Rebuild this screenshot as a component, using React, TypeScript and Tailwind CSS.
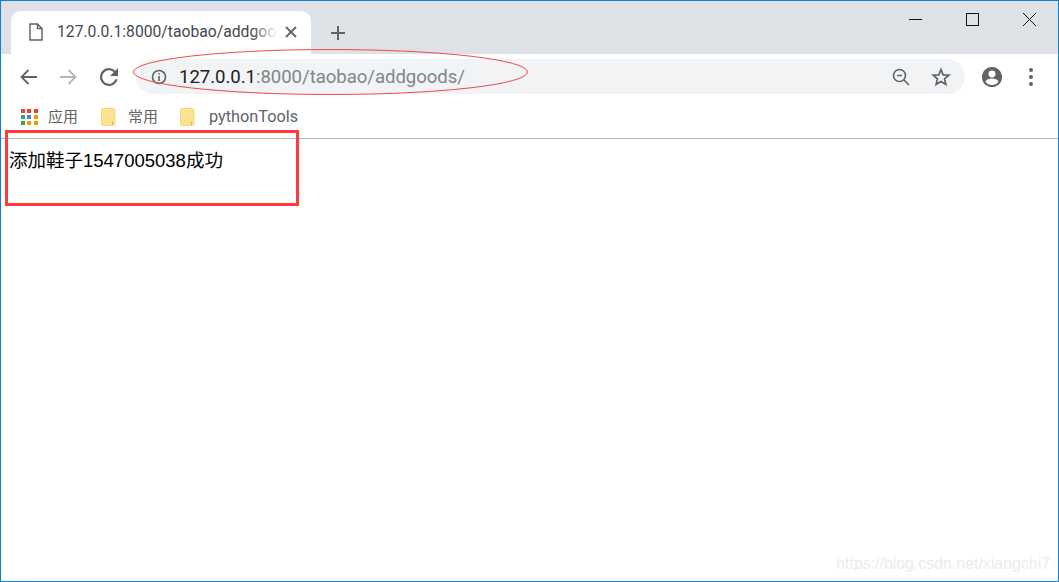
import React from "react";

const ui = "font-['Roboto','Noto_Sans_CJK_SC',sans-serif]";

function Folder() {
  return (
    <svg width="16" height="18" viewBox="0 0 16 18" className="shrink-0">
      <path d="M1.5 1.5 Q1.5 0.5 2.5 0.5 H13 Q15 0.5 15 3 V16 Q15 17.5 13.500 17.500 H2.500 Q1.500 17.500 1.500 16.500 Z" fill="#fde293" stroke="#fbd873" />
      <path d="M12.500 17 V13.500" stroke="#d9b85c" strokeWidth="1" />
    </svg>
  );
}

function Apps() {
  const c = ["#ea4335", "#ea4335", "#ea4335", "#34a853", "#4285f4", "#f29900", "#34a853", "#f29900", "#f29900"];
  return (
    <div className="grid grid-cols-3 gap-[2px] w-[17px] shrink-0">
      {c.map((col, i) => (
        <div key={i} className="w-[4px] h-[4px]" style={{ background: col }} />
      ))}
    </div>
  );
}

export default function App() {
  return (
    <div className={`relative w-[1059px] h-[582px] overflow-hidden bg-white border border-[#0f80d8] ${ui}`}>
      {/* Tab strip */}
      <div className="h-[53px] bg-[#dee1e6] flex items-end pl-[10px] relative">
        <div className="w-[300px] h-[43px] bg-white rounded-t-[10px] flex items-center pl-[18px] pb-[2px]">
          <svg width="14" height="18" viewBox="0 0 14 18" fill="none" stroke="#5f6368" strokeWidth="1.5" className="shrink-0">
            <path d="M1 1 H8.500 L13 5.500 V17 H1 Z" />
            <path d="M8.500 1 V5.500 H13" />
          </svg>
          <div className="relative ml-[14px] w-[220px] overflow-hidden whitespace-nowrap text-[15.7px] text-[#45494e] leading-5">
            127.0.0.1:8000/taobao/addgoods/
            <div className="absolute right-0 top-0 bottom-0 w-[24px] bg-gradient-to-r from-transparent to-white" />
          </div>
          <svg width="12" height="12" viewBox="0 0 12 12" stroke="#5f6368" strokeWidth="1.8" className="ml-[8px] shrink-0">
            <path d="M1 1 L11 11 M11 1 L1 11" />
          </svg>
        </div>
        <svg width="14" height="14" viewBox="0 0 14 14" stroke="#5f6368" strokeWidth="2" className="ml-[20px] mb-[14px] shrink-0">
          <path d="M7 0 V14 M0 7 H14" />
        </svg>
        <div className="ml-auto self-start flex items-center mt-[12px] mr-[22px] gap-[44px]">
          <svg width="13" height="13" viewBox="0 0 13 13" stroke="#111" strokeWidth="1"><path d="M0 6.500 H13" /></svg>
          <svg width="13" height="13" viewBox="0 0 13 13" fill="none" stroke="#111" strokeWidth="1"><rect x="0.5" y="0.5" width="12" height="12" /></svg>
          <svg width="13" height="13" viewBox="0 0 13 13" stroke="#111" strokeWidth="1"><path d="M0 0 L13 13 M13 0 L0 13" /></svg>
        </div>
      </div>

      {/* Toolbar */}
      <div className="h-[46px] flex items-center pl-[19px] pb-[6px] pt-[5px]">
        <svg width="17" height="16" viewBox="0 0 17 16" fill="none" stroke="#5f6368" strokeWidth="1.8" className="shrink-0">
          <path d="M17 8 H2 M8.500 1 L1.500 8 L8.500 15" />
        </svg>
        <svg width="17" height="16" viewBox="0 0 17 16" fill="none" stroke="#b4b6b9" strokeWidth="1.8" className="ml-[23px] shrink-0">
          <path d="M0 8 H15 M8.500 1 L15.500 8 L8.500 15" />
        </svg>
        <svg width="18" height="18" viewBox="4 4 16 16" fill="#5f6368" className="ml-[23px] shrink-0">
          <path d="M17.650 6.350A7.960 7.960 0 0 0 12 4a8 8 0 1 0 7.730 10h-2.080A6 6 0 1 1 12 6c1.660 0 3.140.690 4.220 1.780L13 11h7V4l-2.350 2.350z" />
        </svg>
        <div className="ml-[18px] w-[829px] h-[35px] shrink-0 rounded-full bg-[#f1f3f4] flex items-center pl-[15px] pr-[14px]">
          <svg width="16" height="16" viewBox="0 0 16 16" fill="none" stroke="#5f6368" strokeWidth="1.6" className="shrink-0">
            <circle cx="8" cy="8" r="6.500" />
            <path d="M8 7 V12 M8 4 V5.600" />
          </svg>
          <div className="ml-[12px] text-[18.6px] leading-6 whitespace-nowrap font-['Roboto',sans-serif] tracking-[-0.05px]">
            <span className="text-[#202124]">127.0.0.1</span>
            <span className="text-[#80868b]">:8000/taobao/addgoods/</span>
          </div>
          <svg width="18" height="18" viewBox="0 0 18 18" fill="none" stroke="#5f6368" strokeWidth="1.6" className="ml-auto shrink-0">
            <circle cx="7.500" cy="7.500" r="6" />
            <path d="M12 12 L17 17 M5 7.500 H10" />
          </svg>
          <svg width="20" height="20" viewBox="0 0 24 24" fill="none" stroke="#5f6368" strokeWidth="2" className="ml-[21px] shrink-0">
            <path d="M12 3 L14.600 9.400 L21.500 9.900 L16.200 14.300 L17.900 21 L12 17.400 L6.100 21 L7.800 14.300 L2.500 9.900 L9.400 9.400 Z" />
          </svg>
        </div>
        <svg width="22" height="22" viewBox="0 0 24 24" fill="#5f6368" className="ml-[16px] shrink-0">
          <path d="M12 1C5.900 1 1 5.900 1 12s4.900 11 11 11 11-4.900 11-11S18.100 1 12 1zm0 4a3.800 3.800 0 1 1 0 7.600A3.800 3.800 0 0 1 12 5zm0 15.700a8.700 8.700 0 0 1-7-3.600c.1-2.300 4.700-3.600 7-3.600s6.900 1.300 7 3.600a8.700 8.700 0 0 1-7 3.600z" />
        </svg>
        <div className="ml-[26px] flex flex-col gap-[3px] shrink-0">
          <div className="w-[4px] h-[4px] rounded-full bg-[#5f6368]" />
          <div className="w-[4px] h-[4px] rounded-full bg-[#5f6368]" />
          <div className="w-[4px] h-[4px] rounded-full bg-[#5f6368]" />
        </div>
      </div>

      {/* Bookmarks */}
      <div className="h-[39px] flex items-center pl-[20px] pb-[5px] border-b border-[#b4b4b4] text-[15px] text-[#5f6368] leading-5">
        <Apps />
        <span className="ml-[10px]">应用</span>
        <div className="ml-[22px] flex items-center"><Folder /><span className="ml-[12px]">常用</span></div>
        <div className="ml-[21px] flex items-center"><Folder /><span className="ml-[14px] text-[16.3px]">pythonTools</span></div>
      </div>

      {/* Page */}
      <div className="pl-[8px] pt-[11px] text-[18.5px] leading-[22px] text-black font-['Liberation_Sans','Noto_Sans_CJK_SC',sans-serif]">
        添加鞋子1547005038成功
      </div>

      {/* Annotations */}
      <div className="absolute left-[4px] top-[129px] w-[294px] h-[76px] border-[3px] border-[#ff3b3b]" />
      <svg className="absolute left-[131px] top-[47px]" width="398" height="49" viewBox="0 0 398 49" fill="none">
        <ellipse cx="198.500" cy="24" rx="197" ry="22.500" stroke="#f5474d" strokeWidth="1" />
      </svg>
      <div className="absolute right-[8px] bottom-[7px] text-[15.9px] leading-5 text-[#ececec] font-['Liberation_Sans',sans-serif]">
        https://blog.csdn.net/xiangchi7
      </div>
    </div>
  );
}
